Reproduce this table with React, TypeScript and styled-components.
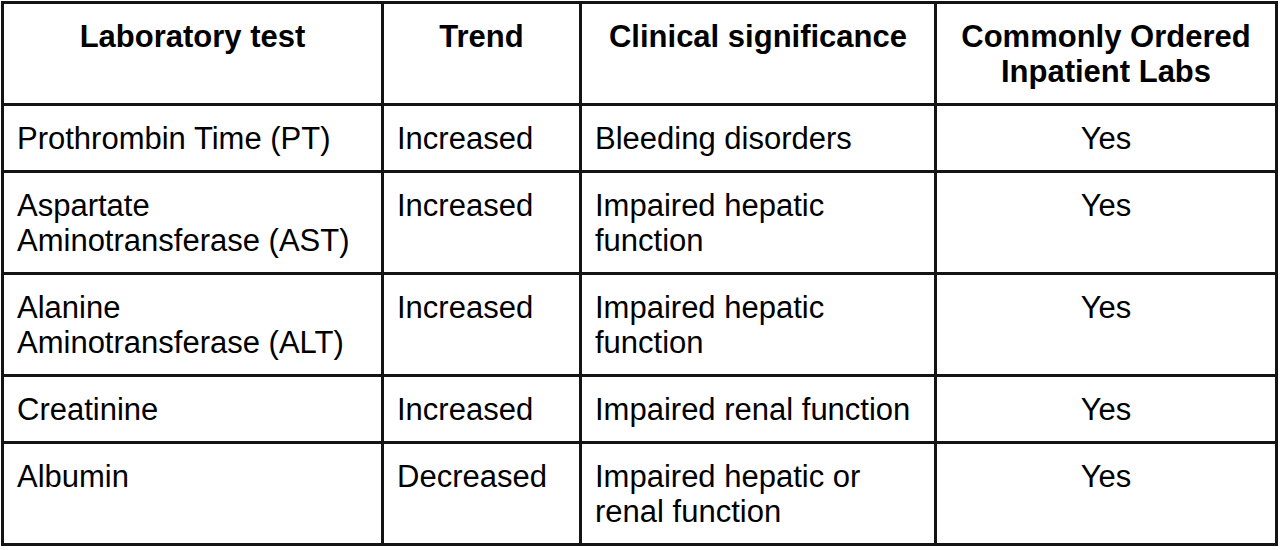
import React from "react";
import styled, { createGlobalStyle } from "styled-components";

const Global = createGlobalStyle`
  html, body {
    margin: 0;
    padding: 0;
    background: #ffffff;
  }
  body {
    font-family: "Liberation Sans", Arial, sans-serif;
    color: #000;
  }
`;

const Table = styled.table`
  border-collapse: collapse;
  table-layout: fixed;
  width: 1274px;
  margin: 1px 0 0 1px;
  font-family: "Liberation Sans", Arial, sans-serif;
  font-size: 31px;
  line-height: 35px;
  color: #000;
`;

const HeadCell = styled.th`
  border: 3px solid #141414;
  padding: 15px 13px 14px;
  font-weight: 700;
  text-align: center;
  vertical-align: top;
`;

const Cell = styled.td<{ $center?: boolean }>`
  border: 3px solid #141414;
  padding: 15px 13px 14px;
  font-weight: 400;
  white-space: pre-line;
  text-align: ${(p) => (p.$center ? "center" : "left")};
  vertical-align: top;
`;

type Row = { test: string; trend: string; sig: string; common: string };

const rows: Row[] = [
  { test: "Prothrombin Time (PT)", trend: "Increased", sig: "Bleeding disorders", common: "Yes" },
  { test: "Aspartate\nAminotransferase (AST)", trend: "Increased", sig: "Impaired hepatic\nfunction", common: "Yes" },
  { test: "Alanine\nAminotransferase (ALT)", trend: "Increased", sig: "Impaired hepatic\nfunction", common: "Yes" },
  { test: "Creatinine", trend: "Increased", sig: "Impaired renal function", common: "Yes" },
  { test: "Albumin", trend: "Decreased", sig: "Impaired hepatic or\nrenal function", common: "Yes" },
];

export default function App() {
  return (
    <>
      <Global />
      <Table>
        <colgroup>
          <col style={{ width: 380 }} />
          <col style={{ width: 198 }} />
          <col style={{ width: 355 }} />
          <col style={{ width: 341 }} />
        </colgroup>
        <thead>
          <tr>
            <HeadCell>Laboratory test</HeadCell>
            <HeadCell>Trend</HeadCell>
            <HeadCell>Clinical significance</HeadCell>
            <HeadCell>
              Commonly Ordered
              <br />
              Inpatient Labs
            </HeadCell>
          </tr>
        </thead>
        <tbody>
          {rows.map((r) => (
            <tr key={r.test}>
              <Cell>{r.test}</Cell>
              <Cell>{r.trend}</Cell>
              <Cell>{r.sig}</Cell>
              <Cell $center>{r.common}</Cell>
            </tr>
          ))}
        </tbody>
      </Table>
    </>
  );
}
